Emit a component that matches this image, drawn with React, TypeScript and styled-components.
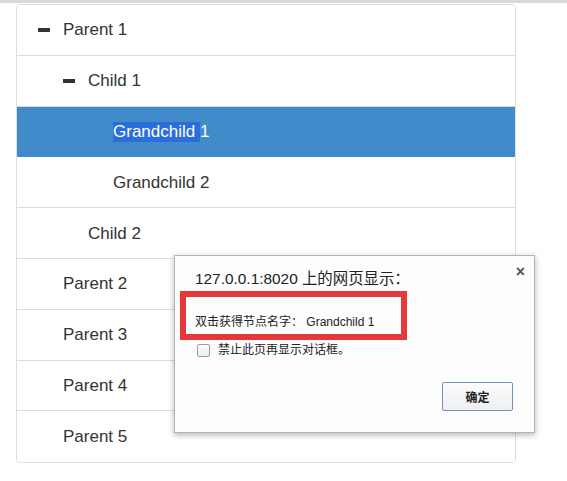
import React from 'react';
import styled, { createGlobalStyle } from 'styled-components';

const GlobalStyle = createGlobalStyle`
  html, body {
    margin: 0;
    padding: 0;
    background: #fff;
    font-family: "Liberation Sans", Arial, "Noto Sans CJK SC", sans-serif;
  }
`;

type Node = { label: string; level: number; open?: boolean; selected?: boolean };

const nodes: Node[] = [
  { label: 'Parent 1', level: 0, open: true },
  { label: 'Child 1', level: 1, open: true },
  { label: 'Grandchild 1', level: 2, selected: true },
  { label: 'Grandchild 2', level: 2 },
  { label: 'Child 2', level: 1 },
  { label: 'Parent 2', level: 0 },
  { label: 'Parent 3', level: 0 },
  { label: 'Parent 4', level: 0 },
  { label: 'Parent 5', level: 0 },
];

const App: React.FC = () => {
  return (
    <>
      <GlobalStyle />
      <TopBar />
      <Tree>
        {nodes.map((n, i) => (
          <Row key={i} $level={n.level} $selected={!!n.selected} $last={i === nodes.length - 1}>
            {n.open ? <Minus /> : <Spacer />}
            {n.selected ? (
              <>
                <Selection>Grandchild </Selection>1
              </>
            ) : (
              n.label
            )}
          </Row>
        ))}
      </Tree>

      <Dialog>
        <Header>
          <Title>127.0.0.1:8020 上的网页显示：</Title>
          <Close>×</Close>
        </Header>
        <Marked>双击获得节点名字： Grandchild 1</Marked>
        <CheckRow>
          <CheckBox />
          <span>禁止此页再显示对话框。</span>
        </CheckRow>
        <Footer>
          <OkButton>确定</OkButton>
        </Footer>
      </Dialog>
    </>
  );
};

const TopBar = styled.div`
  height: 3px;
  background: #d9d9d9;
`;

const Tree = styled.div`
  box-sizing: border-box;
  margin: 1px 0 0 16px;
  width: 500px;
  border: 1px solid #ddd;
  border-radius: 4px;
  overflow: hidden;
`;

const Row = styled.div<{ $level: number; $selected: boolean; $last: boolean }>`
  box-sizing: border-box;
  height: 50.8px;
  display: flex;
  align-items: center;
  padding-top: 1px;
  padding-left: ${(p) => 21 + p.$level * 25}px;
  font-size: 17px;
  color: ${(p) => (p.$selected ? '#fff' : '#333')};
  background: ${(p) => (p.$selected ? '#428bca' : '#fff')};
  border-bottom: ${(p) => (p.$last ? 'none' : `1px solid ${p.$selected ? '#428bca' : '#ddd'}`)};
`;

const Minus = styled.span`
  display: inline-block;
  width: 12px;
  height: 4px;
  background: #333;
  margin-right: 13px;
`;

const Spacer = styled.span`
  display: inline-block;
  width: 25px;
`;

const Selection = styled.span`
  background: #2a6edb;
  white-space: pre;
  line-height: 20px;
`;

const Dialog = styled.div`
  position: absolute;
  left: 174px;
  top: 255px;
  box-sizing: border-box;
  width: 361px;
  height: 178px;
  background: #fdfdfd;
  border: 1px solid #b4b4b4;
  box-shadow: 0 2px 6px rgba(0, 0, 0, 0.3);
  display: flex;
  flex-direction: column;
  padding: 0 21px 21px 20px;
  color: #222;
`;

const Header = styled.div`
  display: flex;
  justify-content: space-between;
  margin-top: 14px;
  margin-right: -12px;
`;

const Title = styled.div`
  font-size: 15.4px;
  line-height: 18px;
  color: #222;
`;

const Close = styled.div`
  font-size: 16px;
  font-weight: bold;
  line-height: 10px;
  color: #555;
  margin-top: -3px;
`;

const Marked = styled.div`
  box-sizing: border-box;
  margin: 3px 0 0 -15px;
  width: 227px;
  height: 49px;
  border: 6px solid #e5383b;
  padding: 17px 0 0 9px;
  font-size: 12px;
  line-height: 16px;
  color: #222;
  white-space: nowrap;
`;

const CheckRow = styled.div`
  display: flex;
  align-items: center;
  gap: 8px;
  margin: 4px 0 0 2px;
  font-size: 12px;
  line-height: 13px;
  color: #222;
`;

const CheckBox = styled.span`
  box-sizing: border-box;
  flex: none;
  width: 13px;
  height: 13px;
  border: 1px solid #9a9a9a;
  border-radius: 2px;
  background: linear-gradient(#fff, #ececec);
`;

const Footer = styled.div`
  margin-top: auto;
  display: flex;
  justify-content: flex-end;
`;

const OkButton = styled.div`
  box-sizing: border-box;
  width: 71px;
  height: 29px;
  border: 1px solid #7393b8;
  border-radius: 2px;
  background: linear-gradient(#fcfcfc, #efefef);
  display: flex;
  align-items: center;
  justify-content: center;
  font-size: 12px;
  font-weight: bold;
  color: #222;
`;

export default App;
